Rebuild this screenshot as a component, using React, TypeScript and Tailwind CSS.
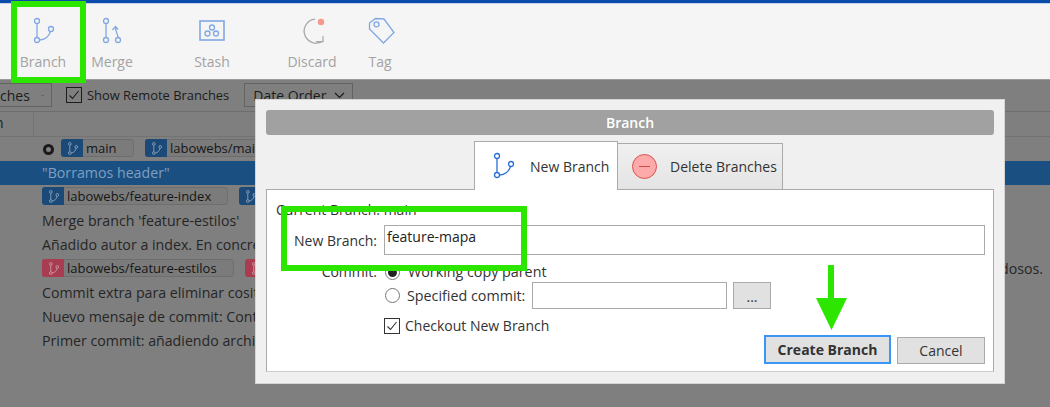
import React from "react";

const font = { fontFamily: '"Open Sans", "Noto Sans", sans-serif' };

function BranchGlyph({ color, size = 24 }: { color: string; size?: number }) {
  return (
    <svg width={size} height={size} viewBox="0 0 24 24" fill="none" stroke={color} strokeWidth="1.6">
      <circle cx="7" cy="3.5" r="2.5" />
      <circle cx="7" cy="20.5" r="2.5" />
      <circle cx="19" cy="9" r="2.5" />
      <path d="M7 6V18M9.5 20.5C14 20 18 16 18.5 11.5" />
    </svg>
  );
}

function LargeBranch({ color }: { color: string }) {
  return (
    <svg width="26" height="29" viewBox="0 0 26 29" fill="none" stroke={color} strokeWidth="1.3">
      <circle cx="7" cy="5" r="2.5" />
      <circle cx="7" cy="24" r="2.5" />
      <circle cx="21" cy="13" r="2.5" />
      <path d="M7 7.5V21.5M9.5 24C15 24 19 20 20.5 15.5" />
    </svg>
  );
}

function ToolItem({ w, label, children }: { w: string; label: string; children: React.ReactNode }) {
  return (
    <div className={`flex flex-col items-center ${w}`}>
      <div className="h-[29px] flex items-center justify-center">{children}</div>
      <span className="mt-[7px] text-[14px] leading-[20px] text-[#a3a3a3]">{label}</span>
    </div>
  );
}

function Pill({ red, w, text }: { red?: boolean; w: string; text: string }) {
  return (
    <div className={`flex items-center h-[18px] mb-[2px] rounded-[3px] border border-[#6e6e6e] bg-[#7b7b7b] ${w}`}>
      <span className={`w-[22px] h-[18px] -ml-px rounded-l-[3px] flex items-center justify-center ${red ? "bg-[#a93c50]" : "bg-[#1c4a78]"}`}>
        <BranchGlyph color={red ? "#c9a0a8" : "#8fa6bf"} size={13} />
      </span>
      <span className="ml-[3px] text-[13px] leading-[16px] text-[#161616] whitespace-nowrap">{text}</span>
    </div>
  );
}

function Row({ children, selected }: { children: React.ReactNode; selected?: boolean }) {
  return (
    <div className={`h-[24px] flex items-center pl-[42px] pr-[7px] gap-[11px] text-[14.2px] whitespace-nowrap ${selected ? "bg-[#1a4f82] text-[#7f9fc0]" : "text-[#262626]"}`}>
      {children}
    </div>
  );
}

function Check({ dark }: { dark?: boolean }) {
  return (
    <span className={`w-[16px] h-[16px] border flex items-center justify-center ${dark ? "border-[#1c1c1c]" : "border-[#333] bg-white"}`}>
      <svg width="12" height="12" viewBox="0 0 12 12" fill="none" stroke={dark ? "#1c1c1c" : "#333"} strokeWidth="1.1">
        <path d="M1.5 6.5L4.5 9.5L10.5 2" />
      </svg>
    </span>
  );
}

function Chevron() {
  return (
    <svg width="11" height="7" viewBox="0 0 11 7" fill="none" stroke="#1c1c1c" strokeWidth="1.2">
      <path d="M1 1L5.5 5.5L10 1" />
    </svg>
  );
}

export default function App() {
  return (
    <div className="relative w-[1050px] h-[407px] overflow-hidden bg-[#7f7f7f] flex flex-col" style={font}>
      <div className="h-[3px] bg-[#0b4cab] shrink-0" />
      <div className="h-px bg-[#c4d4ea] shrink-0" />
      <div className="h-[76px] bg-[#f5f5f5] shrink-0 flex pl-[12px] pt-[12px] border-b border-[#9a9a9a]">
        <ToolItem w="w-[62px]" label="Branch">
          <LargeBranch color="#80a8e4" />
        </ToolItem>
        <ToolItem w="w-[76px]" label="Merge">
          <svg width="24" height="29" viewBox="0 0 24 29" fill="none" stroke="#80a8e4" strokeWidth="1.3">
            <circle cx="6" cy="5" r="2.5" />
            <circle cx="6" cy="24" r="2.5" />
            <circle cx="18" cy="24" r="2.5" />
            <path d="M6 7.5V21.5M18 21.5C18 18 15.5 16 15.5 11.5M12.5 14L15.5 10.5L18 13.5" />
          </svg>
        </ToolItem>
        <ToolItem w="w-[124px]" label="Stash">
          <svg width="26" height="22" viewBox="0 0 26 22" fill="none" stroke="#80a8e4" strokeWidth="1.3">
            <rect x="1" y="1" width="24" height="19" strokeWidth="1.6" />
            <circle cx="13" cy="7.5" r="2.5" />
            <circle cx="8.5" cy="13.5" r="2.5" />
            <circle cx="17" cy="13.5" r="2.5" />
          </svg>
        </ToolItem>
        <ToolItem w="w-[76px]" label="Discard">
          <svg width="26" height="29" viewBox="0 0 26 29" fill="none">
            <path d="M16 3.2A12 12 0 1 0 24 25" stroke="#a8a8a8" strokeWidth="1.3" />
            <path d="M24 20V25.7H17" stroke="#a8a8a8" strokeWidth="1.2" />
            <circle cx="22" cy="6" r="3.2" fill="#f8978a" />
          </svg>
        </ToolItem>
        <ToolItem w="w-[60px]" label="Tag">
          <svg width="29" height="27" viewBox="0 0 29 27" fill="none" stroke="#80a8e4" strokeWidth="1.3">
            <path d="M3.5 6L9.5 1.5L18 2L28 15.5L17.5 26L3.5 12Z" />
            <circle cx="10.5" cy="7.3" r="2.5" />
          </svg>
        </ToolItem>
      </div>

      <div className="h-[32px] shrink-0 flex items-start pt-[3px] text-[14px] text-[#1c1c1c] border-b border-[#6e6e6e]">
        <div className="w-[52px] h-[24px] border border-[#636363] border-l-0 flex items-center justify-end gap-[11px] pr-[7px] overflow-hidden">
          <span>ches</span>
          <Chevron />
        </div>
        <div className="ml-[14px] mt-[4px] flex items-center gap-[5px]">
          <Check dark />
          <span className="leading-[16px] text-[12.9px]">Show Remote Branches</span>
        </div>
        <div className="ml-[15px] w-[109px] h-[24px] border border-[#636363] flex items-center justify-between pl-[8px] pr-[7px]">
          <span>Date Order</span>
          <Chevron />
        </div>
      </div>

      <div className="h-[25px] shrink-0 flex text-[14px] text-[#1c1c1c] border-b border-[#737373]">
        <div className="w-[34px] border-r border-[#737373] overflow-hidden">
          <span className="block -ml-[5px]">n</span>
        </div>
      </div>

      <div className="flex flex-col">
        <Row>
          <span className="w-[11px] h-[11px] ml-[1px] -mr-[4px] rounded-full border-[3px] border-[#1a1a1a]" />
          <Pill w="w-[73px]" text="main" />
          <Pill w="w-[130px]" text="labowebs/main" />
        </Row>
        <Row selected>&quot;Borramos header&quot;</Row>
        <Row>
          <Pill w="w-[186px]" text="labowebs/feature-index" />
          <Pill w="w-[186px]" text="labowebs/feature-index" />
        </Row>
        <Row>Merge branch &#39;feature-estilos&#39;</Row>
        <Row>Añadido autor a index. En concreto</Row>
        <Row>
          <Pill red w="w-[192px]" text="labowebs/feature-estilos" />
          <Pill red w="w-[192px]" text="labowebs/feature-estilos" />
          <span className="ml-auto">dosos.</span>
        </Row>
        <Row>Commit extra para eliminar cositas</Row>
        <Row>Nuevo mensaje de commit: Contenido</Row>
        <Row>Primer commit: añadiendo archivos</Row>
      </div>

      {/* Modal dialog */}
      <div className="absolute left-[255px] top-[99px] w-[750px] h-[285px] bg-[#f0f0f0] border border-[#d4d4d4] px-[10px] pt-[10px] flex flex-col text-[#333] text-[14px]">
        <div className="h-[25px] shrink-0 rounded-[3px] bg-[#a1a1a1] flex items-center justify-center text-white font-semibold">
          Branch
        </div>
        <div className="h-[55px] shrink-0 flex items-end pl-[208px] -mb-px relative z-10">
          <div className="w-[144px] h-[49px] bg-white border border-[#aaa] border-b-0 flex items-center pl-[15px] gap-[14px]">
            <span className="mb-[2px]">
              <LargeBranch color="#2a6fd6" />
            </span>
            <span>New Branch</span>
          </div>
          <div className="w-[165px] h-[47px] border border-l-0 border-[#aaa] bg-gradient-to-b from-[#f0f0f0] to-[#e4e4e4] flex items-center pl-[14px] gap-[13px]">
            <span className="w-[25px] h-[25px] rounded-full border border-[#d9534f] bg-[#ffaaaa] flex items-center justify-center">
              <span className="w-[11px] h-px bg-[#c94a46]" />
            </span>
            <span>Delete Branches</span>
          </div>
        </div>
        <div className="h-[183px] shrink-0 bg-white border border-[#aaa] border-b-[#ccc] pl-[9px] pr-[8px] pt-[10px] flex flex-col">
          <div className="h-[19px] leading-[19px] whitespace-nowrap">Current Branch: main</div>
          <div className="mt-[6px] h-[30px] flex items-center">
            <span className="w-[101px] mr-[7px] text-right whitespace-nowrap pt-[1px]">New Branch:</span>
            <div className="flex-1 h-[30px] border border-[#aaa] pl-[2px] text-[#222] leading-[22px]">feature-mapa</div>
          </div>
          <div className="mt-[7px] flex">
            <span className="w-[101px] mr-[7px] text-right leading-[20px]">Commit:</span>
            <div className="flex flex-col">
              <div className="h-[20px] flex items-center gap-[8px] ml-px">
                <span className="w-[15px] h-[15px] rounded-full border border-[#777] flex items-center justify-center">
                  <span className="w-[9px] h-[9px] rounded-full bg-[#222]" />
                </span>
                <span className="text-[14.3px]">Working copy parent</span>
              </div>
              <div className="h-[27px] flex items-center ml-px">
                <span className="w-[15px] h-[15px] rounded-full border border-[#777]" />
                <span className="ml-[7px] w-[125px] whitespace-nowrap text-[14.3px]">Specified commit:</span>
                <span className="w-[195px] h-[27px] border border-[#aaa]" />
                <span className="ml-[6px] w-[38px] h-[27px] border border-[#aaa] bg-[#e1e1e1] flex items-center justify-center leading-[20px] pt-[2px]">...</span>
              </div>
              <div className="mt-[9px] h-[16px] flex items-center gap-[5px]">
                <Check />
                <span className="leading-[16px]">Checkout New Branch</span>
              </div>
            </div>
          </div>
          <div className="mt-[1px] flex justify-end items-end gap-[6px]">
            <button className="w-[127px] h-[29px] border-2 border-[#3a96f5] bg-[#e1e1e1] font-bold text-[#333]">Create Branch</button>
            <button className="w-[88px] h-[27px] border border-[#aaa] bg-[#e1e1e1] text-[#333]">Cancel</button>
          </div>
        </div>
      </div>

      {/* Tutorial annotations */}
      <div className="absolute left-[11px] top-[1px] w-[75px] h-[82px] border-[6px] border-[#2ce600]" />
      <div className="absolute left-[281px] top-[206px] w-[246px] h-[65px] border-[6px] border-[#2ce600]" />
      <svg className="absolute left-[816px] top-[265px]" width="31" height="65" viewBox="0 0 31 65">
        <path d="M12 0H18V33H31L15.5 65L0 33H12Z" fill="#2ce600" />
      </svg>
    </div>
  );
}
